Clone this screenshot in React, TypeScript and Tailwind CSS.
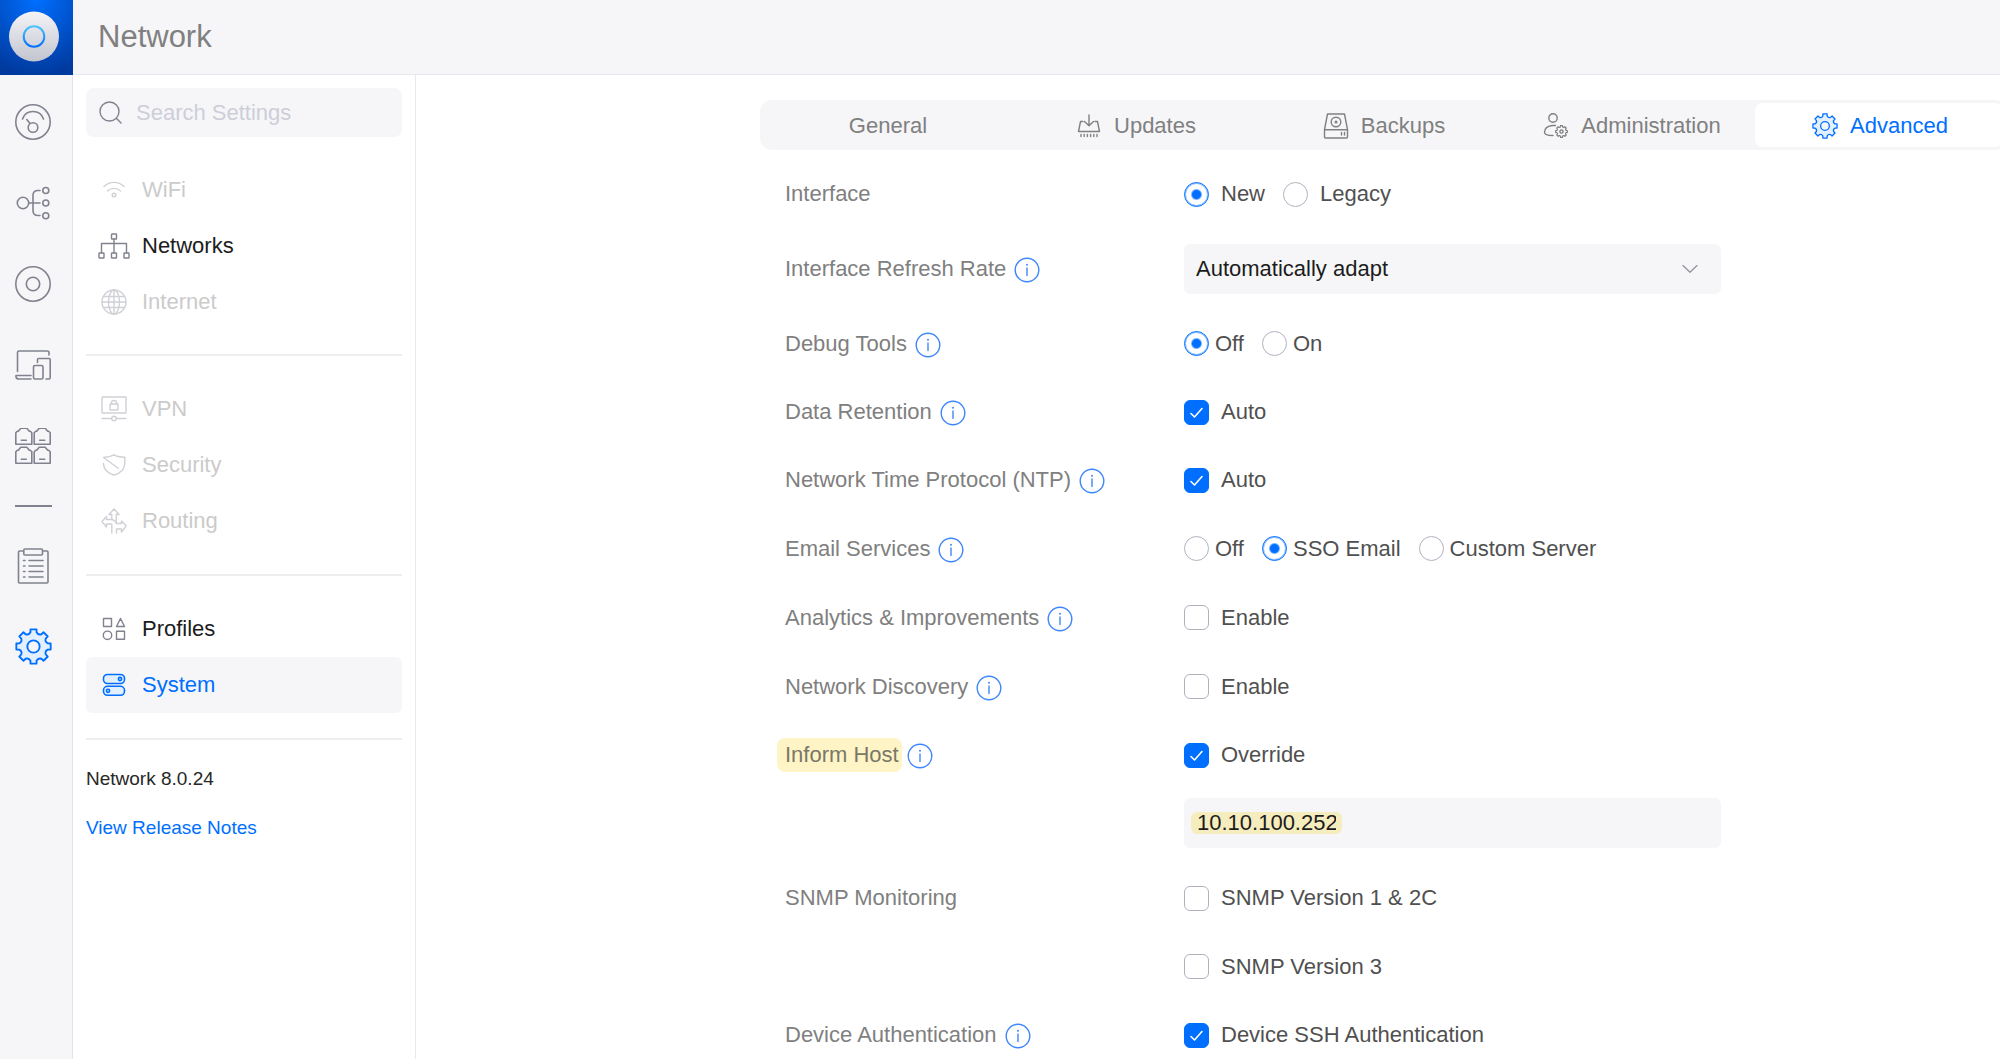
import React from 'react';

interface IconProps {
  className?: string;
}

const svgProps = {
  fill: 'none',
  stroke: 'currentColor',
  strokeLinecap: 'round' as const,
  strokeLinejoin: 'round' as const,
  'aria-hidden': true,
};

// Eight-toothed gear outline around (cx, cy)
const gearPath = (cx: number, cy: number, r: number, teeth = 8) => {
  const step = 360 / teeth;
  const at = (deg: number, radius: number) => {
    const a = ((deg - 90) * Math.PI) / 180;
    return `${(cx + radius * Math.cos(a)).toFixed(2)} ${(cy + radius * Math.sin(a)).toFixed(2)}`;
  };
  let d = '';
  for (let i = 0; i < teeth; i++) {
    const mid = i * step;
    d += `${i === 0 ? 'M' : 'L'}${at(mid - step * 0.22, r * 0.98)}L${at(mid + step * 0.22, r * 0.98)}`;
    d += `L${at(mid + step * 0.27, r * 0.82)}Q${at(mid + step * 0.5, r * 0.68)} ${at(mid + step * 0.73, r * 0.82)}`;
  }
  return `${d}Z`;
};

const GearIcon = ({ className }: IconProps) => (
  <svg viewBox="0 0 36 36" strokeWidth="1.8" className={className} {...svgProps}>
    <path d={gearPath(18, 18, 17.3)} fill="#e2effe" />
    <circle cx="18" cy="18" r="6" fill="#f6f6f8" />
  </svg>
);

const DashboardIcon = ({ className }: IconProps) => (
  <svg viewBox="0 0 36 36" strokeWidth="1.6" className={className} {...svgProps}>
    <circle cx="18" cy="18" r="17.2" />
    <path d="M7.5 15C9 10.5 13 7.5 18 7.5S27 10.5 28.5 15" />
    <circle cx="18" cy="23.5" r="4.8" />
    <path d="M15 19.5L11.8 15.5" />
  </svg>
);

const TopologyIcon = ({ className }: IconProps) => (
  <svg viewBox="0 0 36 36" strokeWidth="1.6" className={className} {...svgProps}>
    <circle cx="8" cy="18" r="5.7" />
    <path d="M13.7 18H25M25 5.5H23C20 5.5 18 7.5 18 10.5V25.5C18 28.5 20 30.5 23 30.5H25" />
    <circle cx="30.8" cy="5.5" r="3" />
    <circle cx="30.8" cy="18" r="3" />
    <circle cx="30.8" cy="30.8" r="3" />
  </svg>
);

const DevicesIcon = ({ className }: IconProps) => (
  <svg viewBox="0 0 36 36" strokeWidth="1.6" className={className} {...svgProps}>
    <circle cx="18" cy="18" r="17.2" />
    <circle cx="18" cy="18" r="6.7" />
  </svg>
);

const ClientsIcon = ({ className }: IconProps) => (
  <svg viewBox="0 0 36 36" strokeWidth="1.6" className={className} {...svgProps}>
    <path d="M2.5 24.5V5.500Q2.500 4 4 4H32Q34 4 34 5.500V8" />
    <path d="M16 28.500H1V30Q1.500 32 4 32H16" />
    <path d="M22.500 15.500V12.500Q22.500 11.500 23.500 11.500H34Q35.200 11.500 35.200 12.500V30.500Q35.200 32 34 32H31" />
    <rect x="18.500" y="18.500" width="9.500" height="13.500" rx="1.500" />
  </svg>
);

const portPath = (x: number, y: number) =>
  `M${x} ${y + 16}V${y + 4.5}L${x + 1.5} ${y + 3}H${x + 2.5}L${x + 5} ${y}H${x + 11}L${x + 13.5} ${y + 3}H${x + 14.5}L${x + 16} ${y + 4.5}V${y + 16}ZM${x + 5.5} ${y + 12}H${x + 10.5}`;

const PortsIcon = ({ className }: IconProps) => (
  <svg viewBox="0 0 36 36" strokeWidth="1.6" className={className} {...svgProps}>
    <path d={portPath(0.8, 0.3)} />
    <path d={portPath(19.2, 0.3)} />
    <path d={portPath(0.8, 19.2)} />
    <path d={portPath(19.2, 19.2)} />
  </svg>
);

const ClipboardIcon = ({ className }: IconProps) => (
  <svg viewBox="0 0 36 36" strokeWidth="1.6" className={className} {...svgProps}>
    <path d="M8.500 3H4.500Q3.500 3 3.500 4V34Q3.500 35 4.500 35H32Q33 35 33 34V4Q33 3 32 3H28" />
    <rect x="8.800" y="1" width="18.700" height="6" rx="1" />
    <path d="M8.500 12.500H10M14 12.500H28M8.500 18H10M14 18H28M8.500 23.500H10M14 23.500H28M8.500 29H10M14 29H28" />
  </svg>
);

const SearchIcon = ({ className }: IconProps) => (
  <svg viewBox="0 0 24 24" strokeWidth="1.4" className={className} {...svgProps}>
    <circle cx="10.500" cy="10.500" r="9.500" />
    <path d="M17.300 17.300L22 22" />
  </svg>
);

const WifiIcon = ({ className }: IconProps) => (
  <svg viewBox="0 0 32 26" strokeWidth="1.4" className={className} {...svgProps}>
    <path d="M6 9.500C11.500 4 20.500 4 26 9.500M9.500 14C13 10.500 19 10.500 22.500 14" />
    <circle cx="16" cy="18" r="1.800" />
  </svg>
);

const NetworksIcon = ({ className }: IconProps) => (
  <svg viewBox="0 0 32 26" strokeWidth="1.4" className={className} {...svgProps}>
    <rect x="13.500" y="1" width="5" height="5" rx="0.500" />
    <rect x="1" y="20" width="5" height="5" rx="0.500" />
    <rect x="13.500" y="20" width="5" height="5" rx="0.500" />
    <rect x="26" y="20" width="5" height="5" rx="0.500" />
    <path d="M16 6V20M3.500 20V10.500H28.500V20" />
  </svg>
);

const InternetIcon = ({ className }: IconProps) => (
  <svg viewBox="0 0 32 26" strokeWidth="1.4" className={className} {...svgProps}>
    <circle cx="16" cy="13" r="12" />
    <ellipse cx="16" cy="13" rx="5.500" ry="12" />
    <path d="M16 1V25M5.500 7.500H26.500M4 13H28M5.500 18.500H26.500" />
  </svg>
);

const VpnIcon = ({ className }: IconProps) => (
  <svg viewBox="0 0 32 26" strokeWidth="1.4" className={className} {...svgProps}>
    <rect x="4" y="1" width="24" height="16" rx="0.500" />
    <rect x="12" y="8" width="8" height="6" rx="0.500" />
    <path d="M13.500 8V6.500Q13.500 4.500 16 4.500T18.500 6.500V8M4 22.500H13.500M18.500 22.500H28" />
    <circle cx="16" cy="22.500" r="2.300" />
  </svg>
);

const SecurityIcon = ({ className }: IconProps) => (
  <svg viewBox="0 0 32 26" strokeWidth="1.4" className={className} {...svgProps}>
    <path d="M16 2.800Q19.500 5 26.800 5.200V11Q26.800 20 16 23Q5.500 20 5.500 11.500" />
    <path d="M16 2.800Q12 5 5.500 5.500L20.500 16.500" />
  </svg>
);

const RoutingIcon = ({ className }: IconProps) => (
  <svg viewBox="0 0 32 26" strokeWidth="1.4" className={className} {...svgProps}>
    <path d="M13.800 25V16H8.500V19L4 13.500L8.500 8.500V11.500H13.800V6.500H11L16 1L21 6.500H18.200V14.500" />
    <path d="M18.500 25V21H23.500V24L28.300 18L23.500 13V15.500H18.500L16.500 12.500L13.800 11.500" />
  </svg>
);

const ProfilesIcon = ({ className }: IconProps) => (
  <svg viewBox="0 0 32 26" strokeWidth="1.4" className={className} {...svgProps}>
    <rect x="5.500" y="2.500" width="8" height="8" />
    <path d="M22.500 2.500L26.500 10.500H18.500Z" />
    <circle cx="9.500" cy="19.300" r="4.200" />
    <rect x="18.500" y="15.300" width="8" height="8" />
  </svg>
);

const SystemIcon = ({ className }: IconProps) => (
  <svg viewBox="0 0 32 26" strokeWidth="1.6" className={className} {...svgProps}>
    <rect x="5.500" y="2.500" width="21" height="9" rx="4" fill="#e2effe" />
    <rect x="5.500" y="14.300" width="21" height="9" rx="4" fill="#e2effe" />
    <circle cx="22" cy="7" r="1.600" />
    <circle cx="10" cy="18.800" r="1.600" />
  </svg>
);

const UpdatesIcon = ({ className }: IconProps) => (
  <svg viewBox="0 0 26 26" strokeWidth="1.400" className={className} {...svgProps}>
    <path d="M13 2V12.500M8.500 8.500L13 12.800L17.500 8.500" />
    <path d="M7 8.500H4.500L2.500 18.500H23.500L21.500 8.500H19" />
    <path d="M5 21.500V23.500M8.200 21.500V23.500M11.400 21.500V23.500M14.600 21.500V23.500M17.800 21.500V23.500M21 21.500V23.500" />
  </svg>
);

const BackupsIcon = ({ className }: IconProps) => (
  <svg viewBox="0 0 26 26" strokeWidth="1.400" className={className} {...svgProps}>
    <path d="M1.500 16.500L4.500 1H21.500L24.500 16.500V24Q24.500 25 23.500 25H2.500Q1.500 25 1.500 24ZM1.500 16.800H24.500" />
    <circle cx="13" cy="9" r="4.800" />
    <circle cx="13" cy="9" r="0.800" />
    <path d="M18.500 19.500V22M21.500 19.500V22" />
  </svg>
);

const AdministrationIcon = ({ className }: IconProps) => (
  <svg viewBox="0 0 26 26" strokeWidth="1.400" className={className} {...svgProps}>
    <circle cx="10" cy="5" r="4.200" />
    <path d="M12.500 12.500H9Q1.500 13.500 1.500 19.500Q1.500 22.500 10 22.500" />
    <path d={gearPath(18.5, 18.5, 6)} strokeWidth="1.200" />
    <circle cx="18.500" cy="18.500" r="1.600" />
  </svg>
);

const InfoIcon = () => (
  <svg viewBox="0 0 26 26" className="size-[26px] text-[#3f86fb]" {...svgProps}>
    <circle cx="13" cy="13" r="11.800" strokeWidth="1.400" />
    <path d="M13 11V18.500" strokeWidth="1.400" />
    <circle cx="13" cy="7.800" r="1" fill="currentColor" stroke="none" />
  </svg>
);

const Logo = () => (
  <svg viewBox="0 0 73 75" className="h-[75px] w-[73px]" aria-hidden="true">
    <defs>
      <radialGradient id="logo-bg" cx="0.5" cy="0" r="1">
        <stop offset="0" stopColor="#006fff" />
        <stop offset="1" stopColor="#003a9f" />
      </radialGradient>
      <linearGradient id="logo-disc" x1="0" y1="0" x2="0" y2="1">
        <stop offset="0" stopColor="#f4f4f7" />
        <stop offset="1" stopColor="#c2c4cf" />
      </linearGradient>
      <linearGradient id="logo-ring" x1="0" y1="0" x2="0" y2="1">
        <stop offset="0" stopColor="#50c4fb" />
        <stop offset="1" stopColor="#0070ff" />
      </linearGradient>
    </defs>
    <rect width="73" height="75" fill="url(#logo-bg)" />
    <circle cx="34" cy="36.500" r="25" fill="url(#logo-disc)" />
    <circle cx="34" cy="36.500" r="10.300" fill="none" stroke="url(#logo-ring)" strokeWidth="2" />
  </svg>
);

const railItems = [
  { label: 'Dashboard', Icon: DashboardIcon },
  { label: 'Topology', Icon: TopologyIcon },
  { label: 'Devices', Icon: DevicesIcon },
  { label: 'Clients', Icon: ClientsIcon },
  { label: 'Ports', Icon: PortsIcon },
];

interface NavItem {
  label: string;
  Icon: React.FC<IconProps>;
  state: 'muted' | 'normal' | 'active';
}

const navGroups: NavItem[][] = [
  [
    { label: 'WiFi', Icon: WifiIcon, state: 'muted' },
    { label: 'Networks', Icon: NetworksIcon, state: 'normal' },
    { label: 'Internet', Icon: InternetIcon, state: 'muted' },
  ],
  [
    { label: 'VPN', Icon: VpnIcon, state: 'muted' },
    { label: 'Security', Icon: SecurityIcon, state: 'muted' },
    { label: 'Routing', Icon: RoutingIcon, state: 'muted' },
  ],
  [
    { label: 'Profiles', Icon: ProfilesIcon, state: 'normal' },
    { label: 'System', Icon: SystemIcon, state: 'active' },
  ],
];

const navText = {
  muted: 'text-[#cbcbcb]',
  normal: 'text-[#1c1c1c]',
  active: 'bg-[#f6f6f8] text-[#006fff]',
};

const navIcon = {
  muted: 'text-[#d0d1d6]',
  normal: 'text-[#80828f]',
  active: 'text-[#006fff]',
};

const tabs: { label: string; Icon?: React.FC<IconProps> }[] = [
  { label: 'General' },
  { label: 'Updates', Icon: UpdatesIcon },
  { label: 'Backups', Icon: BackupsIcon },
  { label: 'Administration', Icon: AdministrationIcon },
  { label: 'Advanced', Icon: GearIcon },
];

const RailButton = ({ label, active, children }: { label: string; active?: boolean; children: React.ReactNode }) => (
  <button
    type="button"
    aria-label={label}
    className={`flex h-[81px] w-full items-center justify-center pr-[6px] ${active ? 'text-[#006fff]' : 'text-[#80828f]'}`}
  >
    {children}
  </button>
);

interface RowProps {
  label?: string;
  info?: boolean;
  highlight?: boolean;
  height?: string;
  children: React.ReactNode;
}

const Row = ({ label, info, highlight, height = 'h-[68px]', children }: RowProps) => (
  <div role="group" aria-label={label} className={`flex items-center ${height}`}>
    <div className={`flex w-[399px] shrink-0 items-center ${highlight ? 'gap-[5px]' : 'gap-2'}`}>
      {label && (
        <span className={highlight ? '-ml-2 rounded-lg bg-[#fff4c5] py-[3px] pr-[3px] pl-2 text-[#7a7868]' : ''}>
          {label}
        </span>
      )}
      {info && (
        <button type="button" aria-label={`About ${label}`} className="pt-[2px]">
          <InfoIcon />
        </button>
      )}
    </div>
    {children}
  </div>
);

interface RadioGroupProps {
  name: string;
  options: string[];
  selected: string;
  wide?: boolean;
}

const RadioGroup = ({ name, options, selected, wide }: RadioGroupProps) => (
  <div className="flex items-center gap-[18px] text-[#505050]">
    {options.map((option) => (
      <label key={option} className={`flex items-center ${wide ? 'gap-3' : 'gap-[6px]'}`}>
        <input
          type="radio"
          name={name}
          defaultChecked={option === selected}
          className="size-[25px] appearance-none rounded-full border border-[#b0b2c0] bg-white checked:border-[#006fff] checked:bg-[radial-gradient(circle,#006fff_4px,#ffffff_6px)] checked:shadow-[inset_0_0_0_1px_#8fc0ff]"
        />
        {option}
      </label>
    ))}
  </div>
);

const Checkbox = ({ label, checked }: { label: string; checked?: boolean }) => (
  <label className="flex items-center gap-3 text-[#505050]">
    <span className="relative flex">
      <input
        type="checkbox"
        defaultChecked={checked}
        className="peer size-[25px] appearance-none rounded-md border border-[#b0b2c0] bg-white checked:border-[#006fff] checked:bg-[#006fff]"
      />
      <svg
        viewBox="0 0 25 25"
        strokeWidth="1.600"
        className="pointer-events-none absolute inset-0 hidden size-[25px] text-white peer-checked:block"
        {...svgProps}
      >
        <path d="M7 13.500L10.500 17L18 8.500" />
      </svg>
    </span>
    {label}
  </label>
);

const App: React.FC = () => {
  return (
    <div className="flex h-screen flex-col overflow-hidden bg-white font-['Liberation_Sans',Arial,sans-serif] text-[22px] leading-[28px] text-[#808080]">
      {/* Header */}
      <header className="flex h-[75px] shrink-0 items-center border-b border-[#e8e9ed] bg-[#f6f6f8]">
        <a href="#home" aria-label="Home" className="h-[75px]">
          <Logo />
        </a>
        <h1 className="pl-[25px] text-[31px] leading-[36px]">Network</h1>
      </header>

      <div className="flex min-h-0 flex-1">
        {/* Icon rail */}
        <nav aria-label="Main" className="w-[73px] shrink-0 border-r border-[#e3e4e8] bg-[#f6f6f8] pt-[6px]">
          {railItems.map(({ label, Icon }) => (
            <RailButton key={label} label={label}>
              <Icon className="size-9" />
            </RailButton>
          ))}
          <hr className="mt-[19px] mb-[18px] ml-[15px] w-[37px] border-t-2 border-[#80828f]" />
          <RailButton label="Logs">
            <ClipboardIcon className="size-9" />
          </RailButton>
          <RailButton label="Settings" active>
            <GearIcon className="size-[37px]" />
          </RailButton>
        </nav>

        {/* Settings sidebar */}
        <aside className="w-[343px] shrink-0 border-r border-[#e8e9ed] px-[13px] pt-[13px]">
          <label className="flex h-[49px] items-center gap-[13px] rounded-lg bg-[#f6f6f8] px-[13px] text-[#80828f]">
            <SearchIcon className="size-6 shrink-0" />
            <input
              type="search"
              aria-label="Search Settings"
              placeholder="Search Settings"
              className="min-w-0 flex-1 bg-transparent outline-none placeholder:text-[#cdced8]"
            />
          </label>

          <nav aria-label="Settings" className="pt-[25px]">
            {navGroups.map((group, idx) => (
              <ul key={idx} className={`mb-[25px] border-b-2 border-[#eeeef0] ${idx === 0 ? 'pb-6' : 'pb-[25px]'}`}>
                {group.map(({ label, Icon, state }) => (
                  <li key={label}>
                    <a href={`#${label.toLowerCase()}`} className={`flex h-14 items-center gap-3 rounded-md pl-3 ${navText[state]}`}>
                      <Icon className={`h-[26px] w-8 ${navIcon[state]}`} />
                      {label}
                    </a>
                  </li>
                ))}
              </ul>
            ))}
          </nav>

          <p className="text-[19px] leading-[28px] text-[#282828]">Network 8.0.24</p>
          <a href="#release-notes" className="mt-[21px] inline-block text-[19px] leading-[28px] text-[#006fff]">
            View Release Notes
          </a>
        </aside>

        {/* Settings form */}
        <main className="min-w-0 flex-1 overflow-hidden pt-[25px] pl-[344px]">
          <div role="tablist" className="-mr-[6px] flex h-[50px] rounded-xl bg-[#f6f6f8] p-[3px]">
            {tabs.map(({ label, Icon }) => {
              const active = label === 'Advanced';
              return (
                <button
                  key={label}
                  type="button"
                  role="tab"
                  aria-selected={active}
                  className={`flex flex-1 basis-0 items-center justify-center gap-3 rounded-lg pt-0.5 pl-0.5 ${active ? 'bg-white text-[#006fff]' : 'text-[#808080]'}`}
                >
                  {Icon && <Icon className="size-[26px]" />}
                  {label}
                </button>
              );
            })}
          </div>

          <form className="pt-[10px] pl-[25px]">
            <Row label="Interface">
              <RadioGroup name="interface" options={['New', 'Legacy']} selected="New" wide />
            </Row>
            <Row label="Interface Refresh Rate" info height="h-[81px]">
              <div className="relative w-[537px]">
                <select
                  aria-label="Interface Refresh Rate"
                  className="h-[50px] w-full appearance-none rounded-md bg-[#f6f6f8] px-3 text-[#1c1c1c]"
                >
                  <option>Automatically adapt</option>
                </select>
                <svg
                  viewBox="0 0 16 8"
                  strokeWidth="1.300"
                  className="pointer-events-none absolute top-[21px] right-[23px] h-2 w-4 text-[#92949f]"
                  {...svgProps}
                >
                  <path d="M1 0.500L8 7.300L15 0.500" />
                </svg>
              </div>
            </Row>
            <Row label="Debug Tools" info height="h-[69px]">
              <RadioGroup name="debug" options={['Off', 'On']} selected="Off" />
            </Row>
            <Row label="Data Retention" info>
              <Checkbox label="Auto" checked />
            </Row>
            <Row label="Network Time Protocol (NTP)" info>
              <Checkbox label="Auto" checked />
            </Row>
            <Row label="Email Services" info height="h-[69px]">
              <RadioGroup name="email" options={['Off', 'SSO Email', 'Custom Server']} selected="SSO Email" />
            </Row>
            <Row label="Analytics & Improvements" info height="h-[69px]">
              <Checkbox label="Enable" />
            </Row>
            <Row label="Network Discovery" info height="h-[69px]">
              <Checkbox label="Enable" />
            </Row>
            <Row label="Inform Host" info highlight>
              <Checkbox label="Override" checked />
            </Row>
            <div className="mt-[9px] mb-4 ml-[399px] flex h-[50px] w-[537px] items-center rounded-md bg-[#f6f6f8] pl-[7px]">
              <input
                type="text"
                aria-label="Inform Host address"
                defaultValue="10.10.100.252"
                className="h-[22px] w-[151px] rounded-md bg-[#f6edbe] px-[6px] leading-[22px] text-[#1c1c1c] outline-none"
              />
            </div>
            <Row label="SNMP Monitoring">
              <Checkbox label="SNMP Version 1 & 2C" />
            </Row>
            <Row height="h-[69px]">
              <Checkbox label="SNMP Version 3" />
            </Row>
            <Row label="Device Authentication" info>
              <Checkbox label="Device SSH Authentication" checked />
            </Row>
          </form>
        </main>
      </div>
    </div>
  );
};

export default App;
